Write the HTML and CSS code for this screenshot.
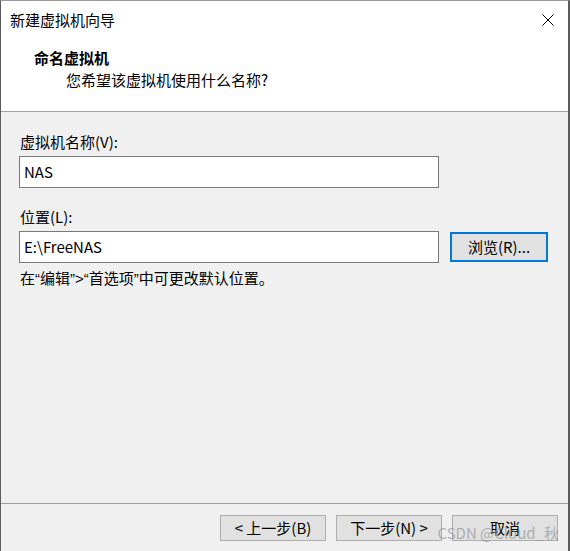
FILE: index.html
```html
<!DOCTYPE html>
<html lang="zh-CN">
<head>
<meta charset="utf-8">
<title>新建虚拟机向导</title>
<link rel="stylesheet" href="styles.css">
</head>
<body>
<div class="window">
  <div class="header">
    <div class="titlebar">
      <span class="title">新建虚拟机向导</span>
      <svg class="close" width="12" height="12" viewBox="0 0 12 12" aria-hidden="true">
        <path d="M0.5 0.5 L11.5 11.5 M11.5 0.5 L0.5 11.5" stroke="#000" stroke-width="1" fill="none"/>
      </svg>
    </div>
    <div class="heading">命名虚拟机</div>
    <div class="subheading">您希望该虚拟机使用什么名称?</div>
  </div>
  <div class="content">
    <div class="label">虚拟机名称(V):</div>
    <div class="field-row">
      <div class="input">NAS</div>
    </div>
    <div class="label label-gap">位置(L):</div>
    <div class="field-row">
      <div class="input">E:\FreeNAS</div>
      <div class="btn btn-focus">浏览(R)...</div>
    </div>
    <div class="hint">在<span class="latin">“</span>编辑<span class="latin">”&gt;“</span>首选项<span class="latin">”</span>中可更改默认位置。</div>
  </div>
  <div class="footer">
    <div class="btn btn-wide">&lt; 上一步(B)</div>
    <div class="btn btn-wide">下一步(N) &gt;</div>
    <div class="btn btn-wide">取消</div>
  </div>
  <div class="watermark">CSDN @Cloud_秋</div>
</div>
</body>
</html>
```

FILE: styles.css
```css
html, body {
  margin: 0;
  padding: 0;
  background: #f0f0f0;
}

body {
  font-family: "Noto Sans CJK SC", "Noto Sans", sans-serif;
  font-size: 15px;
  color: #000;
}

.window {
  position: relative;
  width: 570px;
  height: 551px;
  box-sizing: border-box;
  border-top: 1px solid #9a9a9a;
  border-left: 1px solid #5c5c5c;
  border-right: 2px solid #5c5c5c;
  background: #f0f0f0;
  display: flex;
  flex-direction: column;
  overflow: hidden;
}

.header {
  height: 101px;
  flex: none;
  background: #fff;
  border-bottom: 1px solid #a0a0a0;
  padding-top: 9px;
  box-sizing: content-box;
}

.titlebar {
  display: flex;
  justify-content: space-between;
  align-items: center;
  height: 20px;
  padding: 0 14px 0 9px;
}

.title {
  line-height: 20px;
}

.close {
  display: block;
}

.heading {
  margin: 18px 0 0 33px;
  line-height: 20px;
  font-weight: bold;
}

.subheading {
  margin: 2px 0 0 65px;
  line-height: 20px;
}

.content {
  flex: 1;
  padding: 20px 0 0 18px;
}

.label {
  line-height: 20px;
  margin-left: 1px;
}

.label-gap {
  margin-top: 19px;
}

.field-row {
  display: flex;
  align-items: center;
  gap: 11px;
  margin-top: 4px;
}

.input {
  width: 420px;
  height: 32px;
  box-sizing: border-box;
  border: 1px solid #7a7a7a;
  background: #fff;
  padding-left: 4px;
  line-height: 29px;
}

.btn {
  box-sizing: border-box;
  background: #e1e1e1;
  border: 1px solid #adadad;
  display: flex;
  align-items: center;
  justify-content: center;
  line-height: 20px;
}

.btn-focus {
  width: 98px;
  height: 30px;
  border: 2px solid #0078d7;
}

.hint {
  margin: 5px 0 0 1px;
  line-height: 20px;
}

.latin {
  font-family: "Liberation Sans", "Noto Sans", sans-serif;
}

.footer {
  flex: none;
  border-top: 1px solid #a0a0a0;
  height: 48px;
  box-sizing: border-box;
  padding: 11px 10px 0 0;
  display: flex;
  justify-content: flex-end;
  align-items: flex-start;
  gap: 10px;
}

.btn-wide {
  width: 106px;
  height: 26px;
}

.watermark {
  position: absolute;
  right: 9px;
  bottom: 9px;
  font-size: 15px;
  line-height: 18px;
  color: rgba(150, 150, 150, 0.7);
  pointer-events: none;
}
```
